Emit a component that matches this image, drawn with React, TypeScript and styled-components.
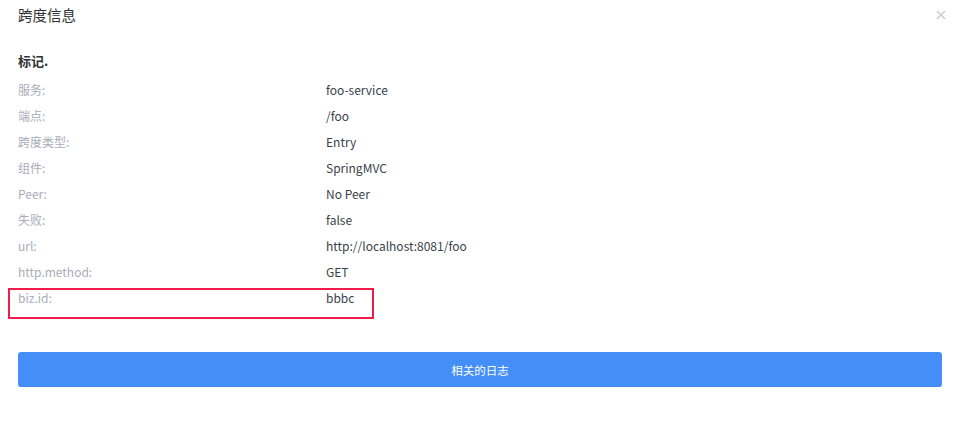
import React from "react";
import styled, { createGlobalStyle } from "styled-components";

const Global = createGlobalStyle`
  html, body { margin: 0; padding: 0; background: #fff; }
  body { font-family: "Noto Sans CJK SC", "Noto Sans", sans-serif; }
`;

const Modal = styled.div`
  width: 959px;
  height: 434px;
  box-sizing: border-box;
  background: #fff;
  display: flex;
  flex-direction: column;
`;

const Header = styled.div`
  display: flex;
  align-items: center;
  justify-content: space-between;
  height: 29px;
  padding: 0 12px 0 18px;
`;

const Title = styled.div`
  font-size: 14.5px;
  color: #303133;
  line-height: 29px;
`;

const Close = styled.button`
  border: none;
  background: none;
  padding: 0;
  width: 12px;
  height: 12px;
  margin-top: 1px;
  display: flex;
  align-items: center;
  justify-content: center;
  cursor: pointer;
`;

const Body = styled.div`
  padding: 21px 17px 0 18px;
  display: flex;
  flex-direction: column;
`;

const SectionTitle = styled.div`
  font-size: 13px;
  font-weight: bold;
  color: #303133;
  line-height: 22px;
  margin-bottom: 5px;
`;

const Row = styled.div`
  position: relative;
  display: grid;
  grid-template-columns: 308px 1fr;
  height: 26px;
  line-height: 26px;
  font-size: 12px;
`;

const Label = styled.div`
  color: #a8adb8;
`;

const Value = styled.div`
  color: #3a3f4a;
`;

const HighlightBox = styled.div`
  position: absolute;
  left: -10px;
  top: 3px;
  width: 366px;
  height: 31px;
  box-sizing: border-box;
  border: 2px solid #f01d4c;
  pointer-events: none;
`;

const Button = styled.button`
  margin-top: 41px;
  width: 924px;
  height: 35px;
  border: none;
  border-radius: 3px;
  background: #448ef7;
  color: #fff;
  font-family: inherit;
  font-size: 11.5px;
  cursor: pointer;
`;

const rows: [string, string][] = [
  ["服务:", "foo-service"],
  ["端点:", "/foo"],
  ["跨度类型:", "Entry"],
  ["组件:", "SpringMVC"],
  ["Peer:", "No Peer"],
  ["失败:", "false"],
  ["url:", "http://localhost:8081/foo"],
  ["http.method:", "GET"],
  ["biz.id:", "bbbc"],
];

export default function App() {
  return (
    <>
      <Global />
      <Modal>
        <Header>
          <Title>跨度信息</Title>
          <Close aria-label="close">
            <svg width="10" height="10" viewBox="0 0 10 10">
              <path d="M1 1L9 9M9 1L1 9" stroke="#c8c9cc" strokeWidth="1.3" />
            </svg>
          </Close>
        </Header>
        <Body>
          <SectionTitle>标记.</SectionTitle>
          {rows.map(([k, v], i) => (
            <Row key={k}>
              <Label>{k}</Label>
              <Value>{v}</Value>
              {i === rows.length - 1 && <HighlightBox />}
            </Row>
          ))}
          <Button>相关的日志</Button>
        </Body>
      </Modal>
    </>
  );
}
